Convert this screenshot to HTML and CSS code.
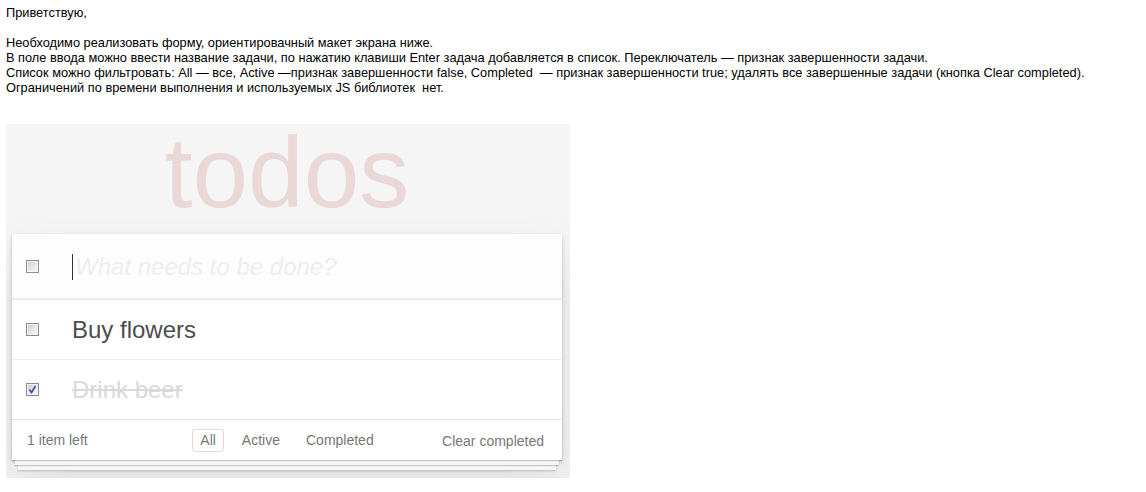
FILE: index.html
```html
<!DOCTYPE html>
<html lang="ru">
<head>
<meta charset="utf-8">
<title>todos</title>
<link rel="stylesheet" href="styles.css">
</head>
<body>
<div class="letter">
  <p class="line">Приветствую,</p>
  <p class="line blank">&nbsp;</p>
  <p class="line">Необходимо реализовать форму, ориентировачный макет экрана ниже.</p>
  <p class="line">В поле ввода можно ввести название задачи, по нажатию клавиши Enter задача добавляется в список. Переключатель — признак завершенности задачи.</p>
  <p class="line">Список можно фильтровать: All — все, Active —признак завершенности false, Completed&nbsp; — признак завершенности true; удалять все завершенные задачи (кнопка Clear completed).</p>
  <p class="line">Ограничений по времени выполнения и используемых JS библиотек&nbsp; нет.</p>
</div>

<section class="app">
  <h1 class="title">todos</h1>
  <div class="board">
    <div class="card">
      <div class="row new-row">
        <span class="check"></span>
        <span class="caret"></span>
        <span class="placeholder">What needs to be done?</span>
      </div>
      <ul class="list">
        <li class="row item">
          <span class="check"></span>
          <span class="label">Buy flowers</span>
        </li>
        <li class="row item done">
          <span class="check checked"><svg viewBox="0 0 11 11" width="11" height="11"><path d="M2.5 5.5 L4.5 8.5 L8.5 2" fill="none" stroke="#3b4f9c" stroke-width="1.6"/></svg></span>
          <span class="label">Drink beer</span>
        </li>
      </ul>
      <div class="footer">
        <span class="count">1 item left</span>
        <ul class="filters">
          <li><a class="filter selected">All</a></li>
          <li><a class="filter">Active</a></li>
          <li><a class="filter">Completed</a></li>
        </ul>
        <span class="clear">Clear completed</span>
      </div>
    </div>
  </div>
</section>
</body>
</html>
```

FILE: styles.css
```css
html, body {
  margin: 0;
  padding: 0;
  background: #ffffff;
}

body {
  font-family: "Liberation Sans", Arial, sans-serif;
  color: #000;
}

.letter {
  padding: 5px 6px 0 6px;
}

.line {
  margin: 0;
  font-size: 12.8px;
  line-height: 15px;
  white-space: nowrap;
}

.app {
  margin: 29px 0 0 6px;
  width: 564px;
  padding-top: 3px;
  background: #f5f5f5;
}

.title {
  margin: 0;
  padding: 0 8px 0 6px;
  font-size: 100px;
  line-height: 90px;
  font-weight: normal;
  text-align: center;
  color: rgba(175, 47, 47, 0.15);
  font-family: "Liberation Sans", Arial, sans-serif;
}

.board {
  padding: 17px 8px 18px 6px;
  overflow: hidden;
}

.card {
  position: relative;
  isolation: isolate;
  background: #fff;
  box-shadow: 0 2px 4px 0 rgba(0, 0, 0, 0.2), 0 25px 50px 0 rgba(0, 0, 0, 0.1);
}

.row {
  display: flex;
  align-items: center;
  padding-left: 14px;
}

.new-row {
  height: 65px;
  background: rgba(0, 0, 0, 0.006);
  border-bottom: 1px solid #e6e6e6;
  box-shadow: inset 0 -2px 1px rgba(0, 0, 0, 0.03);
}

.check {
  box-sizing: border-box;
  width: 13px;
  height: 13px;
  flex: none;
  border: 1px solid #8d8d8d;
  box-shadow: inset 0 0 0 1px #f4f4f4;
  background: linear-gradient(135deg, #c9c9c9 0%, #e8e8e8 55%, #fafafa 100%);
  margin-right: 33px;
  display: flex;
  align-items: center;
  justify-content: center;
}

.check svg {
  display: block;
}

.caret {
  width: 1px;
  height: 26px;
  background: #333;
  flex: none;
}

.placeholder {
  margin-left: 2px;
  font-size: 24px;
  font-style: italic;
  color: #eeeeee;
  line-height: 34px;
}

.list {
  list-style: none;
  margin: 0;
  padding: 0;
}

.item {
  height: 59px;
  border-bottom: 1px solid #ededed;
}

.item:last-child {
  border-bottom: none;
}

.label {
  font-size: 24px;
  line-height: 29px;
  color: #4d4d4d;
}

.done .label {
  color: #d9d9d9;
  text-decoration: line-through;
}

.footer {
  position: relative;
  height: 40px;
  border-top: 1px solid #e6e6e6;
  padding: 0 15px;
  display: grid;
  grid-template-columns: 1fr auto 1fr;
  align-items: center;
  font-size: 14px;
  color: #777;
}

.footer::before {
  content: "";
  position: absolute;
  left: 0;
  right: 0;
  bottom: 0;
  height: 50px;
  overflow: hidden;
  z-index: -1;
  box-shadow: 0 1px 1px rgba(0, 0, 0, 0.2),
              0 8px 0 -3px #f6f6f6,
              0 9px 1px -3px rgba(0, 0, 0, 0.2),
              0 16px 0 -6px #f6f6f6,
              0 17px 2px -6px rgba(0, 0, 0, 0.2);
}

.count {
  justify-self: start;
}

.filters {
  list-style: none;
  margin: 0;
  padding: 0;
  display: flex;
  gap: 10px;
}

.filter {
  display: block;
  padding: 3px 7px;
  line-height: 15px;
  border: 1px solid transparent;
  border-radius: 3px;
  color: #777;
}

.filter.selected {
  border-color: rgba(175, 47, 47, 0.2);
}

.clear {
  justify-self: end;
  margin-right: 3px;
  padding-top: 2px;
}
```
